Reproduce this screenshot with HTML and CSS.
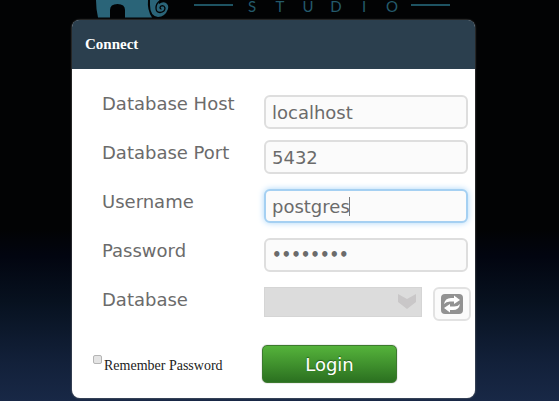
FILE: index.html
```html
<!DOCTYPE html>
<html lang="en">
<head>
<meta charset="utf-8">
<title>Connect</title>
<link rel="stylesheet" href="styles.css">
</head>
<body>
<header class="brand">
  <svg class="elephant" viewBox="0 0 76 20" aria-hidden="true">
    <path fill="#2a6478" d="M1 0H53Q52 10 57 17.500H30V10Q30 4 22.500 4T15 10V17.500H3Q1 9 1 0Z"/>
    <path fill="#2a6478" d="M55 0H65Q63 3 64 4Q68 1 71 3Q74 5 73 9Q70 17 63 17Q55 16 55 5Z"/>
    <path fill="none" stroke="#020304" stroke-width="1.300" stroke-linecap="round" d="M66 0Q61 3 61 8Q61 12.500 65 12.500Q70 12 70 8Q69 5 66 6Q64 8 66 9"/>
  </svg>
  <span class="rule"></span>
  <div class="studio"><span>S</span><span>T</span><span>U</span><span>D</span><span>I</span><span>O</span></div>
  <span class="rule"></span>
</header>
<main class="card">
  <h1 class="title">Connect</h1>
  <form class="form">
    <div class="fields">
      <label for="host">Database Host</label>
      <input class="box host" id="host" type="text" value="localhost">
      <label for="port">Database Port</label>
      <input class="box" id="port" type="text" value="5432">
      <label for="user">Username</label>
      <div class="active">
        <input class="box focused" id="user" type="text" value="postgres">
        <span class="caret"></span>
      </div>
      <label for="pass">Password</label>
      <input class="box secret" id="pass" type="password" value="password">
      <label for="db">Database</label>
      <div class="database">
        <div class="picker">
          <select id="db" disabled></select>
          <svg class="chevron" viewBox="0 0 20 16" aria-hidden="true"><path fill="#c9c7c8" d="M1 0L10 5L19 0V8L10 15L1 8Z"/></svg>
        </div>
        <button class="refresh" type="button" aria-label="Refresh databases">
          <svg viewBox="0 0 22 20" aria-hidden="true">
            <rect width="22" height="20" rx="4" fill="#929292"/>
            <path fill="#fff" d="M3 10Q4 4 10 4H13V1.500L19 6L13 10V7.500H9Q5 7.500 3 10ZM19 10Q18 16 12 16H9V18.500L3 14L9 10V12.500H13Q17 12.500 19 10Z"/>
          </svg>
        </button>
      </div>
    </div>
    <div class="actions">
      <div class="remember">
        <input id="remember" type="checkbox">
        <label for="remember">Remember Password</label>
      </div>
      <button class="login" type="submit">Login</button>
    </div>
  </form>
</main>
</body>
</html>
```
FILE: styles.css
```css
* { box-sizing: border-box; }

html { background: #020304; }

body {
  margin: 0;
  min-height: 100vh;
  padding: 0 84px 3px 72px;
  background: linear-gradient(#020304 57%, #020510 64%, #07111f 75%, #122039 90%, #182846);
  font-family: "DejaVu Sans", sans-serif;
  font-size: 18px;
  color: #6b6b6b;
}

.brand {
  display: flex;
  height: 20px;
  padding-left: 23px;
  color: #245a6b;
}

.elephant { width: 76px; height: 20px; flex: none; margin-right: 23px; }

.rule { width: 39px; height: 2px; margin-top: 4px; background: #1e5362; }

.studio {
  display: grid;
  grid-template-columns: repeat(6, 28px);
  margin: 0 5px;
  font: 15px/12px Lato, sans-serif;
  text-align: center;
}

.card {
  background: #fff;
  border-radius: 8px;
  box-shadow: 0 0 2px #888;
}

.title {
  margin: 0;
  padding: 0 13px;
  border-radius: 7px 7px 0 0;
  background: #2b3f4e;
  color: #fff;
  font: bold 15px/49px "Liberation Serif", serif;
}

.form { padding: 22px 4px 15px 21px; }

.fields {
  display: grid;
  grid-template-columns: 162px 1fr;
  grid-auto-rows: 38px;
  row-gap: 11px;
  align-items: start;
  padding-left: 9px;
}

.fields label { line-height: 26px; }

.box {
  width: calc(100% - 3px);
  height: 34px;
  padding: 0 6px;
  border: 2px solid #dedede;
  border-radius: 6px;
  background: #fbfbfb;
  color: #6b6b6b;
  font: inherit;
}

.host { align-self: end; }

.secret { font-size: 15px; font-weight: bold; }

.active { position: relative; }

.focused { border-color: #a5d0f2; box-shadow: 0 0 6px #a9d5f8; }

.caret {
  position: absolute;
  top: 8px;
  left: 85px;
  width: 1px;
  height: 19px;
  background: #777;
}

.database { display: flex; align-items: flex-start; gap: 11px; }

.picker { position: relative; flex: 1; }

.picker select {
  display: block;
  width: 100%;
  height: 30px;
  appearance: none;
  border: 1px solid #d5d5d5;
  border-radius: 0;
  background: #dcdcdc;
  opacity: 1;
}

.chevron { position: absolute; top: 7px; right: 5px; width: 20px; height: 16px; }

.refresh {
  display: grid;
  place-items: center;
  width: 38px;
  height: 34px;
  padding: 0;
  border: 2px solid #e2e2e2;
  border-radius: 6px;
  background: #fbfbfb;
}

.refresh svg { width: 22px; height: 20px; }

.actions { display: grid; grid-template-columns: 169px 1fr; padding-top: 20px; }

.remember {
  display: flex;
  align-items: flex-start;
  gap: 2px;
  padding-top: 10px;
  color: #222;
  font: 14px/22px "Liberation Serif", serif;
}

.remember input {
  width: 9px;
  height: 9px;
  margin: 0;
  appearance: none;
  border: 1px solid #b5b5b5;
  border-radius: 2px;
  background: #e4e4e4;
}

.login {
  width: 135px;
  height: 38px;
  border: 1px solid #3c7a2e;
  border-radius: 5px;
  background: linear-gradient(#55b33b, #2b7020);
  box-shadow: 0 0 1px #555;
  color: #fff;
  font: inherit;
  text-shadow: 0 -1px 1px #285f1d;
}
```
